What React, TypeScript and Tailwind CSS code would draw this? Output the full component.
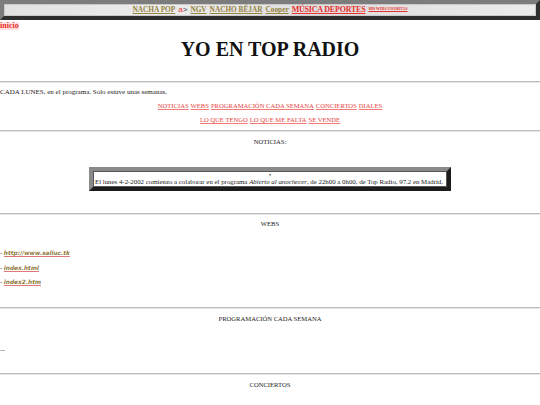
const serif = { fontFamily: '"Liberation Serif", "Times New Roman", serif' };

function Rule() {
  return <div className="h-[2px] w-full border-t border-b border-t-[#bdbdbd] border-b-[#e6e6e6]" />;
}

function Line({ children, className = "" }: { children: React.ReactNode; className?: string }) {
  return (
    <div className={`flex h-[10px] items-center text-[6.6px] leading-[10px] text-[#222] ${className}`}>
      {children}
    </div>
  );
}

const NAV1 = ["NOTICIAS", "WEBS", "PROGRAMACIÓN CADA SEMANA", "CONCIERTOS", "DIALES"];
const NAV2 = ["LO QUE TENGO", "LO QUE ME FALTA", "SE VENDE"];
const WEBS = ["http://www.saliuc.tk", "index.html", "index2.htm"];

function NavLink({ label }: { label: string }) {
  return <a className="text-[#e8423e] underline decoration-[#ef7a76]">{label}</a>;
}

export default function App() {
  return (
    <div className="min-h-[405px] w-[540px] bg-white" style={serif}>
      {/* top menu bar */}
      <div className="h-[20px] border-4 border-t-[#7c7c7c] border-l-[#7c7c7c] border-b-[#2e2e2e] border-r-[#2e2e2e]">
        <div className="flex h-full items-center justify-center gap-[3px] border border-[#c9c9c9] bg-[linear-gradient(90deg,#e2e2e2,#ececec_30%,#dedede_60%,#ebebeb)] font-bold leading-none">
          <a className="text-[7.3px] text-[#958340] underline">NACHA POP</a>
          <span className="text-[8px] font-normal text-[#e33] " style={{ fontFamily: '"Liberation Sans", Arial, sans-serif' }}>
            a<span className="text-[#333]">&gt;</span>
          </span>
          <a className="text-[7.3px] text-[#958340] underline">NGV</a>
          <a className="text-[7.3px] text-[#958340] underline">NACHO BÉJAR</a>
          <a className="text-[7.3px] text-[#958340] underline">Cooper</a>
          <a className="text-[8px] tracking-[-0.2px] text-[#e8302c] underline">MÚSICA DEPORTES</a>
          <a className="text-[3.6px] text-[#e8302c] underline">MIS WEBS FAVORITAS</a>
        </div>
      </div>

      <div className="flex h-[11px] items-center">
        <a className="bg-[#ffe0e0] text-[8px] font-bold leading-none text-[#e8302c]">inicio</a>
      </div>

      <h1 className="mt-[6px] h-[24px] text-center text-[20px] font-bold leading-[24px] text-[#111]">
        YO EN TOP RADIO
      </h1>
      <div className="h-[20px]" />

      <Rule />
      <Line className="mt-[4px] text-[7px]">CADA LUNES, en el programa. Solo estuve unas semanas.</Line>
      <Line className="mt-[4px] justify-center gap-[2px]">
        {NAV1.map((l) => (
          <NavLink key={l} label={l} />
        ))}
      </Line>
      <Line className="mt-[4px] justify-center gap-[2px]">
        {NAV2.map((l) => (
          <NavLink key={l} label={l} />
        ))}
      </Line>
      <div className="mt-[5px]">
        <Rule />
      </div>

      <Line className="mt-[5px] justify-center">NOTICIAS:</Line>
      <div className="mt-[20px] flex justify-center">
        <div className="w-[362px] border-4 border-t-[#8a8a8a] border-l-[#8a8a8a] border-b-[#1c1c1c] border-r-[#1c1c1c]">
          <div className="border border-[#555] bg-white px-[1px] text-[#222]">
            <div className="h-[6px] text-center text-[6px] leading-[7px]">•</div>
            <div className="h-[8px] whitespace-nowrap text-[6.85px] leading-[8px]">
              El lunes 4-2-2002 comienzo a colaborar en el programa <i>Abierto al anochecer</i>, de 22h00 a 0h00, de Top Radio, 97.2 en Madrid.
            </div>
          </div>
        </div>
      </div>

      <div className="mt-[22px]">
        <Rule />
      </div>
      <Line className="mt-[4px] justify-center">WEBS</Line>
      <div className="mt-[19px] flex flex-col gap-[4px]">
        {WEBS.map((w, i) => (
          <Line key={w} className={i === 1 ? "mt-[1px]" : ""}>
            <span>-&nbsp;</span>
            <a
              className="text-[5.8px] font-bold italic text-[#8f7a3a] underline decoration-[#d77]"
              style={{ fontFamily: '"DejaVu Sans", Verdana, sans-serif' }}
            >
              {w}
            </a>
          </Line>
        ))}
      </div>

      <div className="mt-[20px]">
        <Rule />
      </div>
      <Line className="mt-[5px] justify-center">PROGRAMACIÓN CADA SEMANA</Line>
      <Line className="mt-[20px]">...</Line>
      <div className="mt-[19px]">
        <Rule />
      </div>
      <Line className="mt-[5px] justify-center">CONCIERTOS</Line>
      <div className="h-[20px]" />
    </div>
  );
}
